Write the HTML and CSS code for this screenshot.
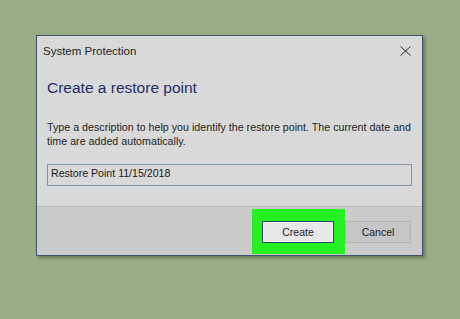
FILE: index.html
```html
<!DOCTYPE html>
<html lang="en">
<head>
    <meta charset="UTF-8">
    <title>System Protection</title>
    <link rel="stylesheet" href="styles.css">
</head>
<body>
    <div class="dialog">
        <div class="titlebar">
            <span class="title">System Protection</span>
            <svg class="close" width="11" height="10" viewBox="0 0 11 10">
                <path d="M0.5 0.5 L10.5 9.5 M10.5 0.5 L0.5 9.5" stroke="#2b2b2b" stroke-width="1" fill="none"/>
            </svg>
        </div>
        <div class="content">
            <h1>Create a restore point</h1>
            <p>Type a description to help you identify the restore point. The current date and time are added automatically.</p>
            <input type="text" class="desc-input" value="Restore Point 11/15/2018">
        </div>
        <div class="footer">
            <div class="highlight">
                <button class="create-button">Create</button>
            </div>
            <button class="cancel-button">Cancel</button>
        </div>
    </div>
</body>
</html>
```

FILE: styles.css
```css
body {
    margin: 0;
    padding: 35px 0 0 36px;
    background-color: #9aad86;
    font-family: "Liberation Sans", Arial, sans-serif;
    height: 319px;
    box-sizing: border-box;
    overflow: hidden;
}

.dialog {
    width: 387px;
    height: 221px;
    box-sizing: border-box;
    background-color: #d9d9d9;
    border: 1px solid #3b566c;
    box-shadow: 2px 2px 3px rgba(40, 50, 30, 0.45);
    display: flex;
    flex-direction: column;
}

.titlebar {
    display: flex;
    justify-content: space-between;
    align-items: flex-start;
    padding: 8px 11px 0 6px;
    height: 14px;
}

.title {
    font-size: 11.5px;
    line-height: 14px;
    color: #1e1e1e;
}

.close {
    margin-top: 2px;
}

.content {
    padding: 0 8px 0 10px;
}

h1 {
    margin: 20px 0 0 0;
    font-size: 15.5px;
    line-height: 20px;
    font-weight: normal;
    color: #1e2c68;
}

p {
    margin: 22px 0 0 0;
    font-size: 10.7px;
    line-height: 14px;
    color: #1e1e1e;
}

.desc-input {
    display: block;
    margin-top: 16px;
    width: 365px;
    height: 22px;
    box-sizing: border-box;
    padding: 1px 3px 5px 3px;
    border: 1px solid #8093a6;
    background-color: #d9d9d9;
    font-family: "Liberation Sans", Arial, sans-serif;
    font-size: 10.6px;
    line-height: 14px;
    color: #1a1a1a;
    outline: none;
}

.footer {
    margin-top: auto;
    height: 49px;
    box-sizing: border-box;
    border-top: 1px solid #b8b8b8;
    background-color: #cbcbcb;
    display: flex;
    justify-content: flex-end;
    align-items: flex-start;
    padding: 2px 11px 0 0;
}

.highlight {
    background-color: #25f021;
    padding: 12px 11px 11px 10px;
}

button {
    width: 72px;
    height: 22px;
    box-sizing: border-box;
    font-family: "Liberation Sans", Arial, sans-serif;
    font-size: 10.5px;
    color: #1a1a1a;
    padding: 0;
    margin: 0;
}

.create-button {
    display: block;
    background-color: #e8e8e8;
    border: 1px solid #2a406c;
    box-shadow: inset 0 0 0 1px #f7f7f7;
}

.cancel-button {
    width: 66px;
    margin-top: 12px;
    background-color: #c6c6c6;
    border: 1px solid #b3b3b3;
}
```
